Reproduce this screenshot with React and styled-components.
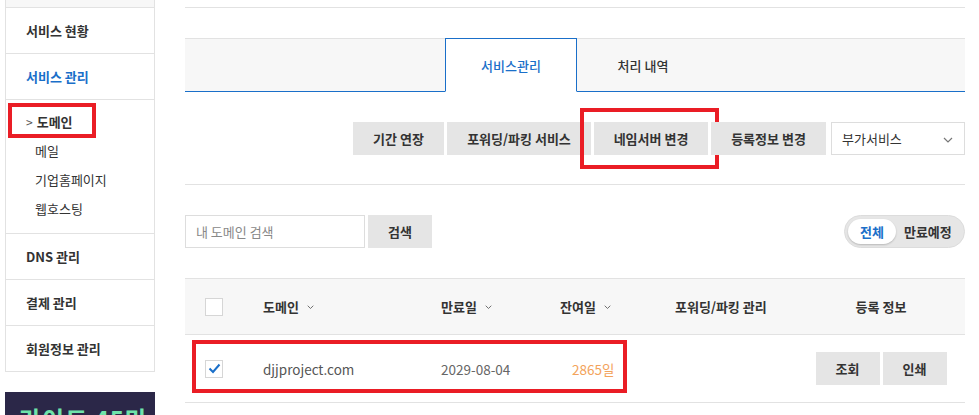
import React from 'react';
import styled, { createGlobalStyle } from 'styled-components';

const GlobalStyle = createGlobalStyle`
  html, body {
    margin: 0;
    padding: 0;
    background: #fff;
    overflow: hidden;
  }
  body {
    font-family: "Noto Sans CJK KR", "Noto Sans", sans-serif;
    color: #333;
    font-size: 13px;
  }
`;

const Page = styled.div`
  display: flex;
  width: 979px;
  height: 415px;
  overflow: hidden;
`;

const Sidebar = styled.div`
  width: 150px;
  margin-left: 5px;
  flex-shrink: 0;
`;

const Menu = styled.div`
  border: 1px solid #e2e2e2;
  border-top: none;
`;

const MenuTop = styled.div`
  height: 7px;
  background: #f7f7f7;
  border-bottom: 1px solid #e2e2e2;
`;

const MenuItem = styled.div`
  height: 45px;
  display: flex;
  align-items: center;
  padding-left: 20px;
  font-weight: 700;
  font-size: 13px;
  color: ${(p) => (p.$active ? '#1a6fc9' : '#333')};
  border-bottom: 1px solid #e2e2e2;
  &:last-child {
    border-bottom: none;
  }
`;

const SubMenu = styled.div`
  padding: 7px 0 10px;
  border-bottom: 1px solid #e2e2e2;
`;

const SubItem = styled.div`
  position: relative;
  height: 29px;
  display: flex;
  align-items: center;
  padding-left: ${(p) => (p.$current ? '20px' : '29px')};
  font-size: 13px;
  font-weight: ${(p) => (p.$current ? 700 : 400)};
  color: #333;
  gap: 4px;
`;

const Arrow = styled.span`
  font-weight: 400;
  color: #555;
  font-size: 12px;
`;

const Highlight = styled.div`
  position: absolute;
  border: 4px solid #ea1d25;
  pointer-events: none;
  top: ${(p) => p.$t}px;
  left: ${(p) => p.$l}px;
  width: ${(p) => p.$w}px;
  height: ${(p) => p.$h}px;
  box-sizing: border-box;
`;

const Banner = styled.div`
  margin-top: 20px;
  height: 60px;
  background: #2b2748;
  color: #6fe3aa;
  font-size: 24px;
  font-weight: 700;
  line-height: 30px;
  padding: 12px 0 0 14px;
  box-sizing: border-box;
  overflow: hidden;
  letter-spacing: 1px;
`;

const Main = styled.div`
  margin-left: 30px;
  width: 780px;
`;

const TopLine = styled.div`
  height: 7px;
  border-bottom: 1px solid #e2e2e2;
`;

const Tabs = styled.div`
  margin-top: 30px;
  height: 52px;
  display: flex;
  background: #f7f7f7;
  border-top: 1px solid #e2e2e2;
  border-bottom: 1px solid #1a6fc9;
  padding-left: 260px;
`;

const Tab = styled.div`
  width: 130px;
  display: flex;
  align-items: center;
  justify-content: center;
  font-size: 13px;
  margin-top: -1px;
  margin-bottom: -1px;
  color: ${(p) => (p.$active ? '#1a6fc9' : '#333')};
  background: ${(p) => (p.$active ? '#fff' : 'transparent')};
  border: 1px solid ${(p) => (p.$active ? '#1a6fc9' : 'transparent')};
  border-bottom-color: ${(p) => (p.$active ? '#fff' : '#1a6fc9')};
  font-weight: 500;
`;

const ActionRow = styled.div`
  display: flex;
  justify-content: flex-end;
  gap: 3px;
  padding: 30px 0 29px;
  border-bottom: 1px solid #e2e2e2;
`;

const GreyButton = styled.div`
  position: relative;
  height: 33px;
  width: ${(p) => p.$w}px;
  background: #e5e5e5;
  display: flex;
  align-items: center;
  justify-content: center;
  font-size: 13px;
  font-weight: 700;
  color: #333;
`;

const Select = styled.div`
  margin-left: 2px;
  width: 111px;
  height: 31px;
  border: 1px solid #ddd;
  display: flex;
  align-items: center;
  justify-content: space-between;
  padding: 0 11px 0 10px;
  font-size: 13px;
  color: #333;
`;

const FilterRow = styled.div`
  display: flex;
  align-items: center;
  justify-content: space-between;
  margin-top: 30px;
`;

const SearchGroup = styled.div`
  display: flex;
  gap: 3px;
`;

const SearchInput = styled.div`
  width: 168px;
  height: 31px;
  border: 1px solid #ddd;
  display: flex;
  align-items: center;
  padding-left: 10px;
  color: #888;
  font-size: 13px;
`;

const Toggle = styled.div`
  width: 116px;
  height: 31px;
  border: 1px solid #dcdcdc;
  border-radius: 17px;
  background: #e6e6e6;
  display: flex;
  align-items: center;
  padding-left: 3px;
  font-size: 13px;
  font-weight: 700;
`;

const ToggleOption = styled.div`
  height: 25px;
  padding: 0 ${(p) => (p.$on ? '12px' : '8px')};
  display: flex;
  align-items: center;
  border-radius: 13px;
  background: ${(p) => (p.$on ? '#fff' : 'transparent')};
  box-shadow: ${(p) => (p.$on ? '0 1px 2px rgba(0,0,0,0.2)' : 'none')};
  color: ${(p) => (p.$on ? '#1a6fc9' : '#333')};
`;

const Table = styled.div`
  margin-top: 30px;
  position: relative;
`;

const Row = styled.div`
  display: grid;
  grid-template-columns: 78px 178px 119px 115px 122px 1fr;
  align-items: center;
  height: ${(p) => (p.$head ? '55px' : '67px')};
  background: ${(p) => (p.$head ? '#f7f7f7' : '#fff')};
  border-top: ${(p) => (p.$head ? '1px solid #e2e2e2' : 'none')};
  border-bottom: 1px solid #e2e2e2;
  font-size: ${(p) => (p.$head ? '13px' : '13.5px')};
  font-weight: ${(p) => (p.$head ? 700 : 400)};
`;

const Cell = styled.div`
  display: flex;
  align-items: center;
  gap: 8px;
  justify-content: ${(p) => (p.$center ? 'center' : 'flex-start')};
  color: ${(p) => p.$color || 'inherit'};
  padding-left: ${(p) => p.$pl || 0}px;
`;

const Check = styled.div`
  width: 16px;
  height: 16px;
  border: 1px solid #d6d6d6;
  background: #fff;
  display: flex;
  align-items: center;
  justify-content: center;
`;

const SmallButton = styled.div`
  width: 64px;
  height: 33px;
  background: #e5e5e5;
  display: flex;
  align-items: center;
  justify-content: center;
  font-size: 13px;
  font-weight: 700;
  color: #333;
`;

const ButtonPair = styled.div`
  display: flex;
  gap: 3px;
`;

const Chevron = ({ size = 7, color = '#555' }) => (
  <svg width={size} height={size * 0.6} viewBox="0 0 10 6" fill="none" style={{ marginTop: 2 }}>
    <path d="M1 1l4 4 4-4" stroke={color} strokeWidth="1.2" />
  </svg>
);

export default function App() {
  return (
    <>
      <GlobalStyle />
      <Page>
        <Sidebar>
          <Menu>
            <MenuTop />
            <MenuItem>서비스 현황</MenuItem>
            <MenuItem $active>서비스 관리</MenuItem>
            <SubMenu>
              <SubItem $current>
                <Arrow>&gt;</Arrow>도메인
                <Highlight $t={-4} $l={2} $w={88} $h={35} />
              </SubItem>
              <SubItem>메일</SubItem>
              <SubItem>기업홈페이지</SubItem>
              <SubItem>웹호스팅</SubItem>
            </SubMenu>
            <MenuItem>DNS 관리</MenuItem>
            <MenuItem>결제 관리</MenuItem>
            <MenuItem>회원정보 관리</MenuItem>
          </Menu>
          <Banner>라이트 45만원</Banner>
        </Sidebar>
        <Main>
          <TopLine />
          <Tabs>
            <Tab $active>서비스관리</Tab>
            <Tab>처리 내역</Tab>
          </Tabs>
          <ActionRow>
            <GreyButton $w={91}>기간 연장</GreyButton>
            <GreyButton $w={144}>포워딩/파킹 서비스</GreyButton>
            <GreyButton $w={114}>
              네임서버 변경
              <Highlight $t={-14} $l={-14} $w={139} $h={61} />
            </GreyButton>
            <GreyButton $w={115}>등록정보 변경</GreyButton>
            <Select>
              부가서비스
              <Chevron size={10} color="#777" />
            </Select>
          </ActionRow>
          <FilterRow>
            <SearchGroup>
              <SearchInput>내 도메인 검색</SearchInput>
              <GreyButton $w={64}>검색</GreyButton>
            </SearchGroup>
            <Toggle>
              <ToggleOption $on>전체</ToggleOption>
              <ToggleOption>만료예정</ToggleOption>
            </Toggle>
          </FilterRow>
          <Table>
            <Row $head>
              <Cell $pl={20}>
                <Check />
              </Cell>
              <Cell>
                도메인 <Chevron />
              </Cell>
              <Cell>
                만료일 <Chevron />
              </Cell>
              <Cell>
                잔여일 <Chevron />
              </Cell>
              <Cell>포워딩/파킹 관리</Cell>
              <Cell $center>등록 정보</Cell>
            </Row>
            <Row>
              <Cell $pl={20}>
                <Check>
                  <svg width="13" height="11" viewBox="0 0 13 11" fill="none">
                    <path d="M1.5 5.5l3.5 3.5 6.5-7.5" stroke="#1a6fc9" strokeWidth="2" />
                  </svg>
                </Check>
              </Cell>
              <Cell $color="#555">djjproject.com</Cell>
              <Cell $color="#666">2029-08-04</Cell>
              <Cell $color="#f3a35c" $pl={12}>2865일</Cell>
              <Cell />
              <Cell $center>
                <ButtonPair>
                  <SmallButton>조회</SmallButton>
                  <SmallButton>인쇄</SmallButton>
                </ButtonPair>
              </Cell>
            </Row>
            <Highlight $t={62} $l={7} $w={435} $h={53} />
          </Table>
        </Main>
      </Page>
    </>
  );
}
